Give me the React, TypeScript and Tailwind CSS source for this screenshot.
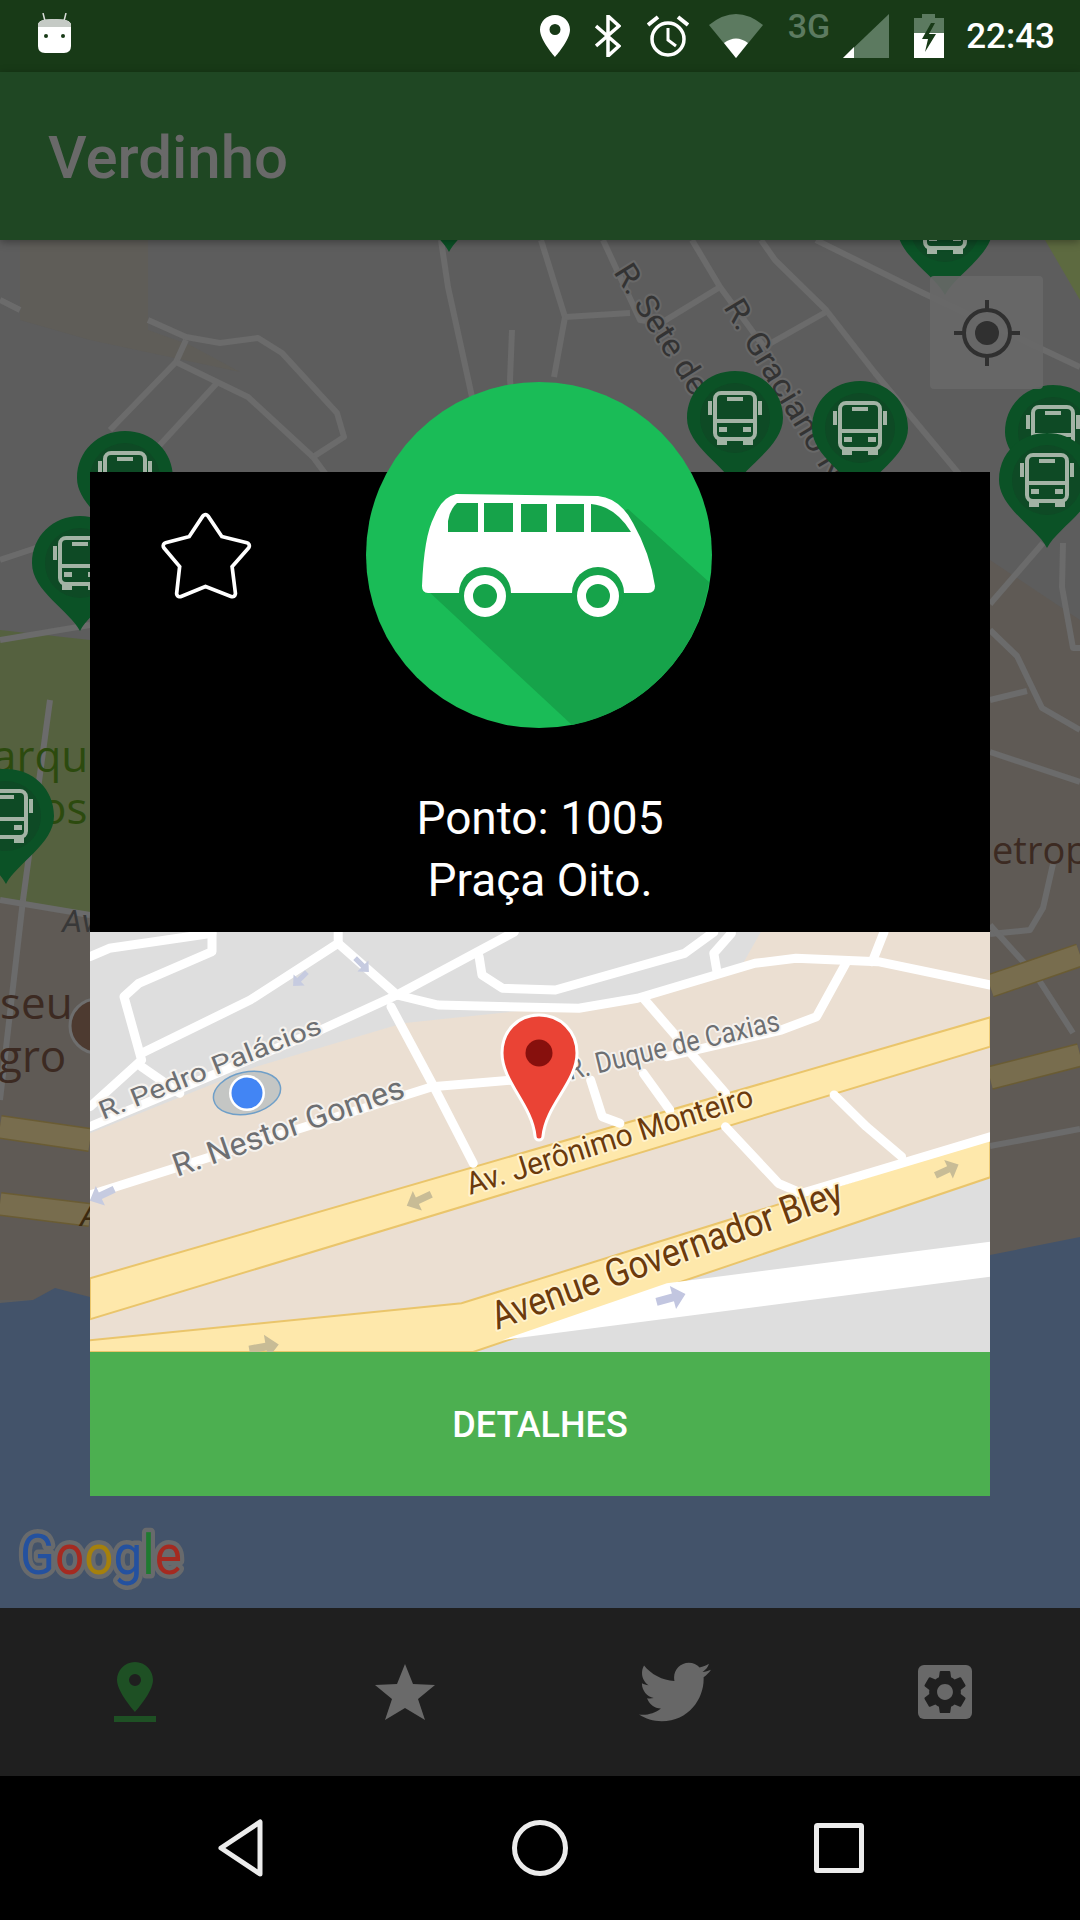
import { FaTwitter } from 'react-icons/fa'

// background map, dimmed by the dialog overlay (page coordinates)
const BG_ROADS = [
  '441,240 448,287 472,397',
  '541,240 565,317 554,377',
  '603,240 640,320 661,323',
  '692,240 720,287 764,347',
  '761,240 775,260 826,310 875,373 964,480',
  '816,240 923,293 1080,367',
  '565,317 630,313',
  '661,323 720,287',
  '764,347 826,312',
  '0,300 20,310',
  '148,320 186,337 220,343 258,338 282,353 337,413 344,437 313,457 330,480',
  '186,340 176,362 110,430',
  '176,362 213,380 248,397 313,457',
  '217,383 158,447',
  '512,330 510,380 512,400',
  '0,560 90,530',
  '0,640 90,625',
  '50,700 23,900 0,1100',
  '0,900 90,915',
  '990,630 1017,656 1042,708 1080,730',
  '990,604 1043,543',
  '1063,543 1062,587 1073,648 1080,648',
  '990,752 1080,782',
  '990,700 1027,691',
  '1053,864 1043,908 1030,930 990,934',
  '990,925 1037,977 1073,1033',
  '990,1146 1080,1129',
]

const BG_YELLOW = [
  '0,1127 90,1140',
  '0,1204 90,1215',
  '990,986 1080,955',
  '990,1078 1080,1055',
]

function MapPin({ x, y }: { x: number; y: number }) {
  return (
    <g transform={`translate(${x} ${y})`}>
      <path d="M0 115C-10 95-48 75-48 47-48 20-27 0 0 0 27 0 48 20 48 47 48 75 10 95 0 115Z" fill="#0b5226" />
      <circle cx="0" cy="47" r="35" fill="#0e4a25" />
      <g fill="none" stroke="#a3b3a5" strokeWidth="4">
        <rect x="-20" y="22" width="40" height="46" rx="6" />
        <path d="M-20 50H20M-8 28H8" />
        <path d="M-25 30V44M25 30V44" />
      </g>
      <path d="M-18 68H-8V74H-18ZM8 68H18V74H8Z" fill="#a3b3a5" />
      <path d="M-16 56H-8V61H-16ZM8 56H16V61H8Z" fill="#a3b3a5" />
    </g>
  )
}

function BackgroundMap() {
  return (
    <svg className="block h-full w-full" viewBox="0 240 1080 1368">
      <rect x="0" y="240" width="1080" height="1368" fill="#5d5d5d" />
      <path d="M0 900L90 915H990V560L1080 620V1300H0Z" fill="#5f5a55" />
      <path d="M0 630L90 640V915L0 900Z" fill="#55613f" />
      <path d="M20 240H148V330L190 345 240 372 90 340 20 320Z" fill="#5f5d58" />
      <path d="M1045 240H1080V300Z" fill="#5d6a40" />
      <path d="M0 1303L33 1300 55 1288 90 1297 990 1255 1080 1237V1608H0Z" fill="#43536a" />
      <g fill="none" stroke="#6b6b6b" strokeWidth="6" strokeLinejoin="round">
        {BG_ROADS.map(points => <polyline key={points} points={points} />)}
      </g>
      <g fill="none" strokeLinejoin="round">
        {BG_YELLOW.map(points => <polyline key={points} points={points} stroke="#6a5c34" strokeWidth="24" />)}
        {BG_YELLOW.map(points => <polyline key={`${points}-in`} points={points} stroke="#786d4e" strokeWidth="21" />)}
      </g>
      <text x="613" y="272" textLength="148" lengthAdjust="spacingAndGlyphs" fontSize="32" fill="#333" stroke="#686868" strokeWidth="4" strokeLinejoin="round" transform="rotate(57.7 613 272)" className="font-['Roboto'] [paint-order:stroke]">R. Sete de</text>
      <text x="723" y="307" textLength="205" lengthAdjust="spacingAndGlyphs" fontSize="32" fill="#333" stroke="#686868" strokeWidth="4" strokeLinejoin="round" transform="rotate(59 723 307)" className="font-['Roboto'] [paint-order:stroke]">R. Graciano N</text>
      <MapPin x={449} y={137} />
      <MapPin x={945} y={180} />
      <MapPin x={735} y={371} />
      <MapPin x={860} y={381} />
      <MapPin x={1053} y={385} />
      <MapPin x={1047} y={433} />
      <MapPin x={125} y={431} />
      <MapPin x={80} y={516} />
      <text x="-8" y="772" fontSize="44" fill="#2c4a0e" className="font-['Open_Sans']">arque</text>
      <text x="40" y="824" fontSize="44" fill="#2c4a0e" className="font-['Open_Sans']">os</text>
      <MapPin x={6} y={769} />
      <text x="62" y="932" fontSize="32" fill="#383838" fontStyle="italic" className="font-['Roboto']">Av</text>
      <text x="0" y="1019" fontSize="44" fill="#3c2a22" className="font-['Open_Sans']">seu</text>
      <text x="-2" y="1072" fontSize="44" fill="#3c2a22" className="font-['Open_Sans']">gro</text>
      <circle cx="97" cy="1026" r="27" fill="#4d3a30" stroke="#6e6e6e" strokeWidth="3" />
      <text x="80" y="1226" fontSize="32" fill="#3c2a10" fontStyle="italic" className="font-['Roboto']">A</text>
      <text x="992" y="864" fontSize="38" fill="#3c2a22" className="font-['Open_Sans']">etrop</text>
      <text x="20" y="1574" fontSize="55" stroke="#686a6c" strokeWidth="9" strokeLinejoin="round" textLength="162" lengthAdjust="spacingAndGlyphs" className="font-['Roboto'] [paint-order:stroke]">
        <tspan fill="#24519f">G</tspan>
        <tspan fill="#a52a20">o</tspan>
        <tspan fill="#a5800c">o</tspan>
        <tspan fill="#24519f">g</tspan>
        <tspan fill="#1f7a30">l</tspan>
        <tspan fill="#a52a20">e</tspan>
      </text>
    </svg>
  )
}

function LocationButton() {
  return (
    <div className="absolute left-[930px] top-[36px] flex h-[113px] w-[113px] items-center justify-center rounded-[4px] bg-[#686868]/90">
      <svg width="66" height="66" viewBox="0 0 66 66" fill="none" stroke="#303030">
        <circle cx="33" cy="33" r="23" strokeWidth="4" />
        <circle cx="33" cy="33" r="12" fill="#303030" stroke="none" />
        <path d="M33 0V10M33 56V66M0 33H10M56 33H66" strokeWidth="4" />
      </svg>
    </div>
  )
}

// dialog map: points read off a 1.704 x 3 crop starting at (80,920)
const at = (x: number, y: number) => `${(80 + x / 1.704).toFixed(1)},${(920 + y / 3).toFixed(1)}`
const line = (pts: number[][]) => pts.map(p => at(p[0], p[1])).join(' ')

const WHITE_ROADS = [
  [[17, 110], [50, 85], [225, 40]],
  [[225, 40], [225, 95], [100, 190], [75, 230], [105, 420], [17, 560]],
  [[105, 400], [290, 240], [440, 70], [440, 36]],
  [[440, 70], [540, 225], [740, 36]],
  [[540, 225], [410, 330], [300, 410], [17, 620]],
  [[105, 440], [170, 520]],
  [[540, 225], [610, 255], [850, 265], [950, 235], [1150, 130], [1220, 115], [1360, 125], [1551, 195]],
  [[680, 110], [685, 165], [720, 205], [810, 210], [1030, 100], [1080, 36]],
  [[1085, 150], [1080, 100], [1110, 40]],
  [[1350, 125], [1370, 36]],
  [[1305, 130], [1255, 290], [1195, 330], [1000, 410]],
  [[960, 235], [1100, 520]],
  [[1100, 620], [1190, 790], [1230, 820], [1551, 650]],
  [[530, 260], [600, 490], [670, 730]],
  [[17, 825], [600, 500], [740, 480]],
  [[870, 480], [890, 590], [920, 610]],
  [[960, 460], [1005, 570]],
  [[1285, 525], [1340, 620], [1400, 710]],
]

const ARROWS = [
  { x: 300, y: 979, r: 135, c: '#c6cbe0', s: 0.65 },
  { x: 362, y: 965, r: 45, c: '#c6cbe0', s: 0.65 },
  { x: 102, y: 1195, r: 155, c: '#c6cbe0', s: 0.9 },
  { x: 419, y: 1200, r: 155, c: '#c8bc96', s: 0.9 },
  { x: 671, y: 1298, r: -15, c: '#c2c6e0', s: 1 },
  { x: 947, y: 1170, r: -25, c: '#c8bc96', s: 0.85 },
  { x: 264, y: 1347, r: -10, c: '#c8bc96', s: 1 },
]

function DetailMap() {
  return (
    <svg className="block h-[420px] w-[900px]" viewBox="90 932 900 420">
      <rect x="90" y="932" width="900" height="420" fill="#dedede" />
      <polygon
        fill="#ebdfd2"
        points={line([[17, 640], [300, 440], [550, 310], [950, 235], [1130, 130], [1160, 36], [1551, 36], [1551, 650], [660, 1150], [17, 1262]])}
      />
      <polygon
        fill="#fee8ab"
        stroke="#eac56b"
        strokeWidth="2"
        points={line([[17, 1075], [1551, 292], [1551, 380], [17, 1198]])}
      />
      <polygon
        fill="#fee8ab"
        stroke="#eac56b"
        strokeWidth="2"
        points={line([[10, 1262], [650, 1150], [1551, 655], [1551, 772], [670, 1296], [10, 1296]])}
      />
      <polygon fill="#ffffff" points={line([[720, 1260], [1000, 1090], [1551, 965], [1551, 1070]])} />
      <g fill="none" stroke="#ffffff" strokeWidth="9" strokeLinejoin="round" strokeLinecap="round">
        {WHITE_ROADS.map(pts => <polyline key={line(pts)} points={line(pts)} />)}
      </g>
      {ARROWS.map(a => (
        <path
          key={`${a.x}-${a.y}`}
          transform={`translate(${a.x} ${a.y}) rotate(${a.r}) scale(${a.s})`}
          d="M-15-4H2V-12L15 0 2 12V4H-15Z"
          fill={a.c}
        />
      ))}
      <text x="103" y="1120" textLength="237" lengthAdjust="spacingAndGlyphs" fontSize="26" fill="#6d6f72" stroke="#f5f2ee" strokeWidth="4" strokeLinejoin="round" transform="rotate(-21.6 103 1120)" className="font-['Roboto'] [paint-order:stroke]">R. Pedro Palácios</text>
      <text x="177" y="1177" textLength="243" lengthAdjust="spacingAndGlyphs" fontSize="32" fill="#6d6f72" stroke="#f5f2ee" strokeWidth="4" strokeLinejoin="round" transform="rotate(-19.3 177 1177)" className="font-['Roboto'] [paint-order:stroke]">R. Nestor Gomes</text>
      <text x="570" y="1080" textLength="217" lengthAdjust="spacingAndGlyphs" fontSize="29" fill="#6d6f72" stroke="#f5f2ee" strokeWidth="4" strokeLinejoin="round" transform="rotate(-13.3 570 1080)" className="font-['Roboto'] [paint-order:stroke]">R. Duque de Caxias</text>
      <text x="470" y="1195" textLength="299" lengthAdjust="spacingAndGlyphs" fontSize="31" fill="#6b3a0c" stroke="#fff3cf" strokeWidth="4" strokeLinejoin="round" transform="rotate(-17.5 470 1195)" className="font-['Roboto'] [paint-order:stroke]">Av. Jerônimo Monteiro</text>
      <text x="497" y="1330" textLength="371" lengthAdjust="spacingAndGlyphs" fontSize="39" fill="#6b3a0c" stroke="#fff3cf" strokeWidth="4" strokeLinejoin="round" transform="rotate(-20 497 1330)" className="font-['Roboto'] [paint-order:stroke]">Avenue Governador Bley</text>
      <ellipse cx="247" cy="1093" rx="34" ry="21" transform="rotate(-12 247 1093)" fill="#c4c6c4" stroke="#6f9fc8" strokeWidth="1.5" />
      <circle cx="247" cy="1093" r="18" fill="#ffffff" />
      <circle cx="247" cy="1093" r="15.5" fill="#4285f4" />
      <path
        d="M539 1015C517 1015 502 1032 502 1053 502 1082 532 1105 535 1136A4 4 0 0 0 543 1136C546 1105 577 1082 577 1053 577 1032 561 1015 539 1015Z"
        fill="#ea4335"
        stroke="#ffffff"
        strokeWidth="3"
      />
      <circle cx="539" cy="1053" r="13.5" fill="#87100d" />
    </svg>
  )
}

function BusBadge() {
  return (
    <svg className="absolute left-[276px] top-[-90px]" width="346" height="346" viewBox="366 381 346 346">
      <circle cx="539" cy="554" r="173" fill="#1abc57" />
      <path d="M426 588L572 724A172 172 0 0 0 709 581L628 508Z" fill="#16a34a" />
      <path
        d="M428 592Q422 592 422 585 424 535 434 516 442 496 456 493L598 495Q620 497 633 522 650 552 655 585 655 592 648 592Z"
        fill="#ffffff"
      />
      <g fill="#16a34a">
        <path d="M448 531V520Q450 508 457 502H478V531Z" />
        <rect x="484" y="502" width="29" height="29" />
        <rect x="521" y="503" width="26" height="28" />
        <rect x="556" y="503" width="28" height="28" />
        <path d="M591 503Q615 505 631 531H591Z" />
        <circle cx="485" cy="592" r="26" />
        <circle cx="598" cy="592" r="26" />
      </g>
      <circle cx="485" cy="595" r="16.5" fill="none" stroke="#ffffff" strokeWidth="9" />
      <circle cx="598" cy="595" r="16.5" fill="none" stroke="#ffffff" strokeWidth="9" />
    </svg>
  )
}

function StatusBar() {
  return (
    <div className="flex h-[72px] shrink-0 items-center bg-[#183a17] pl-[38px] pr-[25px]">
      <svg width="33" height="40" viewBox="0 0 33 40" className="mt-[-6px]">
        <path d="M7 8L5 0M26 8L28 0" stroke="#d8dcd8" strokeWidth="1.5" />
        <path d="M0 12Q0 6 16 6 33 6 33 12V33Q33 40 26 40H7Q0 40 0 33Z" fill="#ffffff" />
        <path d="M0 12Q0 6 16 6 33 6 33 12V14H0Z" fill="#c5cac5" />
        <circle cx="8" cy="23" r="2" fill="#183a17" />
        <circle cx="25" cy="23" r="2" fill="#183a17" />
      </svg>
      <div className="ml-auto flex h-full items-center">
        <svg width="30" height="42" viewBox="0 0 30 42" className="mt-[-1px]">
          <path fillRule="evenodd" d="M15 0C6.7 0 0 6.6 0 14.8 0 25.5 15 42 15 42S30 25.5 30 14.8C30 6.6 23.3 0 15 0ZM15 20A5.5 5.5 0 1 1 15 9 5.5 5.5 0 0 1 15 20Z" fill="#ffffff" />
        </svg>
        <svg width="26" height="42" viewBox="0 0 26 42" className="ml-[25px] mt-[-1px]" fill="none" stroke="#ffffff" strokeWidth="3.5">
          <path d="M1 11L24 31 13 41V1L24 11 1 31" />
        </svg>
        <svg width="42" height="42" viewBox="0 0 42 42" className="ml-[26px] mt-[-1px]" fill="none" stroke="#ffffff">
          <circle cx="21" cy="24" r="16" strokeWidth="3.5" />
          <path d="M21 13V25L29 31" strokeWidth="3" />
          <path d="M1 10L11 2M41 10L31 2" strokeWidth="4" />
        </svg>
        <svg width="54" height="44" viewBox="0 0 54 44" className="ml-[20px] mt-[-1px]">
          <path d="M0 11Q27-11 54 11L27 44Z" fill="#5c7a60" />
          <path d="M15 29Q27 20 39 29L27 44Z" fill="#ffffff" />
        </svg>
        <span className="ml-[25px] mt-[-20px] font-['Roboto'] text-[34px] font-medium leading-none text-[#5c7a60]">3G</span>
        <svg width="46" height="44" viewBox="0 0 46 44" className="ml-[13px] mt-[-1px]">
          <path d="M46 0V44H0Z" fill="#5c7a60" />
          <path d="M11 33V44H0Z" fill="#ffffff" />
        </svg>
        <svg width="30" height="44" viewBox="0 0 30 44" className="ml-[25px] mt-[-1px]">
          <path d="M8 0H21V4H30V44H0V4H8Z" fill="#5c7a60" />
          <path d="M0 19H30V44H0Z" fill="#ffffff" />
          <path d="M17 9L8 25H14L11 38 22 20H15L21 9Z" fill="#183a17" />
        </svg>
        <span className="ml-[22px] font-['Roboto'] text-[35px] font-medium leading-none text-white">22:43</span>
      </div>
    </div>
  )
}

function StopDialog() {
  return (
    <div className="absolute left-[90px] top-[472px] w-[900px] font-['Roboto']">
      <div className="relative flex h-[460px] flex-col items-center justify-end bg-black pb-[21px] text-[46px] leading-[62px] text-white">
        <p>Ponto: 1005</p>
        <p>Praça Oito.</p>
        <BusBadge />
        <svg className="absolute left-[70px] top-[40px]" width="94" height="88" viewBox="160 512 94 88">
          <g transform="translate(206 556) scale(0.92) translate(-206 -556)">
            <polygon
              points="205.4,514.6 221,537.9 249.6,545 230.7,566.4 234.5,596.8 205.4,585.4 177.6,596.8 181,566.4 163,545 190,537.9"
              fill="#ffffff"
              stroke="#ffffff"
              strokeWidth="11"
              strokeLinejoin="round"
            />
            <polygon
              points="205.4,514.6 221,537.9 249.6,545 230.7,566.4 234.5,596.8 205.4,585.4 177.6,596.8 181,566.4 163,545 190,537.9"
              fill="#000000"
              stroke="#000000"
              strokeWidth="3"
              strokeLinejoin="round"
            />
          </g>
        </svg>
      </div>
      <DetailMap />
      <button className="flex h-[144px] w-full items-center justify-center bg-[#4caf50] pt-[2px] text-[36px] font-medium text-white">
        DETALHES
      </button>
    </div>
  )
}

function TabBar() {
  const gear = 'M19.14 12.94c.04-.3.06-.61.06-.94 0-.32-.02-.64-.07-.94l2.03-1.58a.49.49 0 0 0 .12-.61l-1.92-3.32a.488.488 0 0 0-.59-.22l-2.39.96c-.5-.38-1.03-.7-1.62-.94l-.36-2.54a.484.484 0 0 0-.48-.41h-3.84c-.24 0-.43.17-.47.41l-.36 2.54c-.59.24-1.13.57-1.62.94l-2.39-.96c-.22-.08-.47 0-.59.22L2.74 8.87c-.12.21-.08.47.12.61l2.03 1.58c-.05.3-.09.63-.09.94s.02.64.07.94l-2.03 1.58a.49.49 0 0 0-.12.61l1.92 3.32c.12.22.37.29.59.22l2.39-.96c.5.38 1.03.7 1.62.94l.36 2.54c.05.24.24.41.48.41h3.84c.24 0 .44-.17.47-.41l.36-2.54c.59-.24 1.13-.56 1.62-.94l2.39.96c.22.08.47 0 .59-.22l1.92-3.32c.12-.22.07-.47-.12-.61l-2.01-1.58zM12 15.6c-1.98 0-3.6-1.62-3.6-3.6s1.62-3.6 3.6-3.6 3.6 1.62 3.6 3.6-1.62 3.6-3.6 3.6z'
  return (
    <div className="grid h-[168px] shrink-0 grid-cols-4 bg-[#1f1f1f]">
      <div className="flex items-center justify-center">
        <svg width="44" height="60" viewBox="0 0 44 60">
          <path fillRule="evenodd" d="M22 0C11.5 0 4 8.5 4 18 4 30 22 50 22 50S40 30 40 18C40 8.5 32.5 0 22 0ZM22 24A6 6 0 1 1 22 12 6 6 0 0 1 22 24Z" fill="#1e5024" />
          <rect x="1" y="54" width="42" height="6" fill="#1e5024" />
        </svg>
      </div>
      <div className="flex items-center justify-center">
        <svg width="60" height="56" viewBox="0 0 60 56">
          <path d="M30 0L38 20 60 21 43 35 50 56 30 44 10 56 17 35 0 21 22 20Z" fill="#6a6a6a" />
        </svg>
      </div>
      <div className="flex items-center justify-center">
        <FaTwitter size={72} color="#676767" />
      </div>
      <div className="flex items-center justify-center">
        <svg width="54" height="54" viewBox="0 0 54 54">
          <rect width="54" height="54" rx="6" fill="#696969" />
          <g transform="translate(0.6 0.6) scale(2.2)">
            <path d={gear} fill="#1f1f1f" />
          </g>
        </svg>
      </div>
    </div>
  )
}

function NavBar() {
  return (
    <div className="flex h-[144px] shrink-0 items-center justify-center gap-[243px] bg-black">
      <svg width="56" height="58" viewBox="0 0 56 58" fill="none" stroke="#ececec" strokeWidth="5" strokeLinejoin="round">
        <path d="M47 3V55L8 29Z" />
      </svg>
      <svg width="56" height="58" viewBox="0 0 56 58" fill="none" stroke="#ececec" strokeWidth="5">
        <circle cx="28" cy="29" r="25.5" />
      </svg>
      <svg width="56" height="58" viewBox="0 0 56 58" fill="none" stroke="#ececec" strokeWidth="5" strokeLinejoin="round">
        <rect x="5.5" y="6.5" width="45" height="45" rx="1" />
      </svg>
    </div>
  )
}

export default function App() {
  return (
    <div className="relative flex h-[1920px] w-[1080px] flex-col overflow-hidden">
      <StatusBar />
      <div className="z-10 flex h-[168px] shrink-0 items-center bg-[#1f4723] pl-[48px] pt-[4px] shadow-[0_2px_8px_rgba(0,0,0,0.35)]">
        <h1 className="font-['Roboto'] text-[60px] font-medium leading-none text-[#696969]">Verdinho</h1>
      </div>
      <div className="relative min-h-0 flex-1">
        <BackgroundMap />
        <LocationButton />
      </div>
      <TabBar />
      <NavBar />
      <StopDialog />
    </div>
  )
}
